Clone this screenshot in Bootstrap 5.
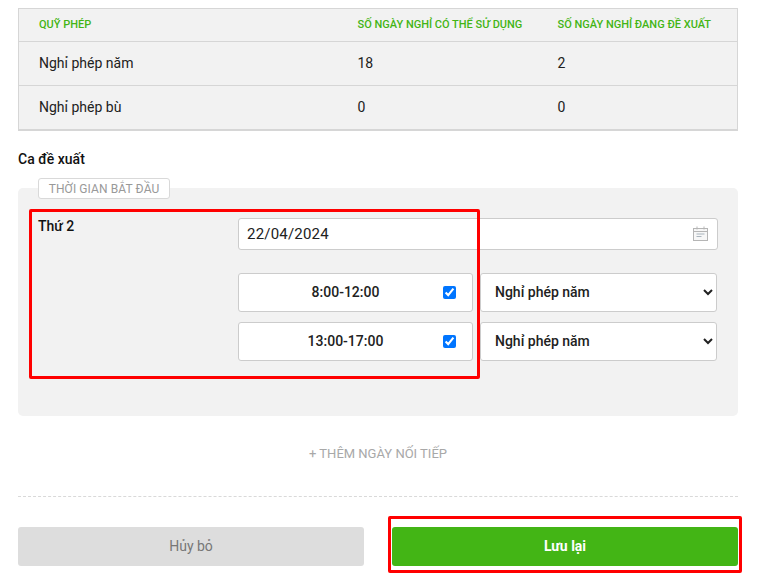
<!DOCTYPE html>
<html lang="vi">
<head>
<meta charset="utf-8">
<title>Ca đề xuất</title>
<link href="https://cdn.jsdelivr.net/npm/bootstrap@5.3.0/dist/css/bootstrap.min.css" rel="stylesheet">
<style>
html,body{height:588px;overflow:hidden;background:#fff}
body{font-family:Roboto,"Liberation Sans",sans-serif;font-size:14px;color:#212121}
.pg{padding:8px 19px 0 18px;position:relative;height:588px}
.qt{width:720px;table-layout:fixed;border-collapse:collapse;margin:0;background:#f2f2f2;border:1px solid #d6d6d6;border-bottom:2px solid #d6d6d6}
.qt th,.qt td{background:#f2f2f2;padding:0 0 0 20px;border-bottom:1px solid #d6d6d6;box-shadow:none;vertical-align:middle}
.qt th{height:33px;font-size:11px;font-weight:500;color:#43b515;text-transform:uppercase;white-space:nowrap}
.qt td{height:44px;font-size:14px;color:#212121}
.qt tr:last-child td{border-bottom:0}
.c1{width:319px}.c2{width:200px}
.ttl{font-size:14px;font-weight:500;color:#111;margin:19px 0 0;line-height:18px}
.pnl{margin-top:20px;height:228px;background:#f2f2f2;border-radius:5px;position:relative;padding:30px 20px 0 20px}
.chip{position:absolute;left:20px;top:-10px;height:21px;width:132px;background:#fff;border:1px solid #d9d9d9;border-radius:3px;color:#999;font-size:12px;letter-spacing:.1px;line-height:20px;text-align:center}
.day{width:200px;font-size:14px;font-weight:500;color:#111;line-height:18px;flex:none;margin-top:-1px}
.rgt{width:480px;flex:none}
.dt{height:32px;background:#fff;border:1px solid #ccc;border-radius:3px;padding:0 8px;font-size:15px;letter-spacing:.2px;color:#212121}
.dt span{padding-top:2px}
.tm{width:235px;height:39px;background:#fff;border:1px solid #ccc;border-radius:3px;font-size:14px;font-weight:500;color:#212121;position:relative;padding-right:20px}
.tm input{position:absolute;left:204px;top:12px;width:13px;height:13px;margin:0}
.sl{width:237px;height:39px;margin-left:7px;border:1px solid #ccc;border-radius:3px;background-color:#fff;background-image:none;appearance:auto;-webkit-appearance:auto;font-size:14px;font-weight:500;color:#212121;padding:0 0 0 10px;box-shadow:none}
.rw1{margin-top:23px}.rw2{margin-top:10px}
.add{margin-top:29px;text-align:center;color:#a8a8a8;font-size:13px;font-weight:400;line-height:18px}
.dash{margin-top:33px;border-top:1px dashed #d9d9d9}
.acts{margin-top:30px;gap:28px}
.bn{width:346px;height:39px;border:0;border-radius:3px;font-size:14px;font-weight:500;padding:0}
.bn-g{background:#ddd;color:#777;font-weight:400}
.bn-s{background:#43b515;color:#fff;font-weight:700}
.rbx{position:absolute;border:3px solid #f00;border-radius:2px;pointer-events:none}
.rb1{left:29px;top:209px;width:451px;height:170px}
.rb2{left:388px;top:516px;width:354px;height:57px}
</style>
</head>
<body>
<div class="pg">
  <table class="table qt">
    <thead><tr><th class="c1">Quỹ phép</th><th class="c2">Số ngày nghỉ có thể sử dụng</th><th>Số ngày nghỉ đang đề xuất</th></tr></thead>
    <tbody>
      <tr><td>Nghỉ phép năm</td><td>18</td><td>2</td></tr>
      <tr><td>Nghỉ phép bù</td><td>0</td><td>0</td></tr>
    </tbody>
  </table>
  <p class="ttl">Ca đề xuất</p>
  <div class="pnl">
    <div class="chip">THỜI GIAN BẮT ĐẦU</div>
    <div class="d-flex">
      <div class="day">Thứ 2</div>
      <div class="rgt">
        <div class="dt d-flex align-items-center justify-content-between">
          <span>22/04/2024</span>
          <svg width="16" height="15" viewBox="0 0 16 15" fill="none" aria-hidden="true"><rect x=".5" y="2.5" width="14" height="12" fill="#f7f7f7" stroke="#b5b5b5"/><path d="M1 5.5h13" stroke="#b5b5b5"/><path d="M4 .5v3M11 .5v3" stroke="#b5b5b5"/><path d="M3.5 8h8M3.5 10.5h5" stroke="#a9b4bd"/></svg>
        </div>
        <div class="d-flex rw1">
          <div class="tm d-flex align-items-center justify-content-center">8:00-12:00<input type="checkbox" checked aria-label="8:00-12:00"></div>
          <select class="form-select sl" aria-label="Loại nghỉ"><option>Nghỉ phép năm</option></select>
        </div>
        <div class="d-flex rw2">
          <div class="tm d-flex align-items-center justify-content-center">13:00-17:00<input type="checkbox" checked aria-label="13:00-17:00"></div>
          <select class="form-select sl" aria-label="Loại nghỉ"><option>Nghỉ phép năm</option></select>
        </div>
      </div>
    </div>
  </div>
  <div class="add">+ THÊM NGÀY NỐI TIẾP</div>
  <div class="dash"></div>
  <div class="d-flex acts">
    <button type="button" class="btn bn bn-g">Hủy bỏ</button>
    <button type="button" class="btn bn bn-s">Lưu lại</button>
  </div>
  <div class="rbx rb1"></div>
  <div class="rbx rb2"></div>
</div>
<script src="https://cdn.jsdelivr.net/npm/bootstrap@5.3.0/dist/js/bootstrap.bundle.min.js"></script>
</body>
</html>
